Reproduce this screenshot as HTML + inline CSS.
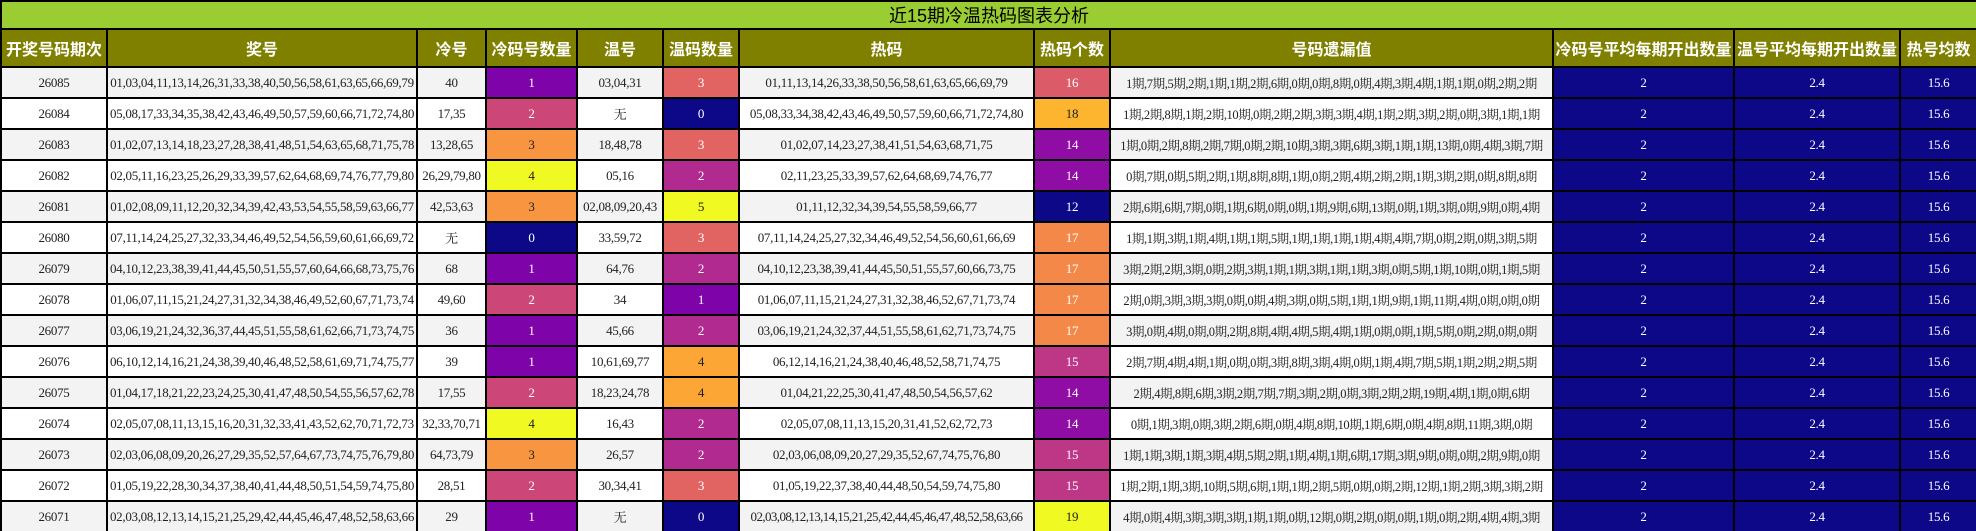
<!DOCTYPE html>
<html><head><meta charset="utf-8"><style>
html,body{margin:0;padding:0;background:#fff;width:1976px;height:531px;overflow:hidden}
table{border-collapse:collapse;table-layout:fixed;width:1976px}
td,th{border:2px solid #000;padding:0;text-align:center;white-space:nowrap;overflow:hidden}
.t td{background:#9acd32;height:26px;font:18px "Liberation Sans","Noto Sans CJK SC",sans-serif;color:#000}
.h th{background:#808000;color:#fff;height:36px;font:bold 16px "Liberation Sans","Noto Sans CJK SC",sans-serif}
tbody td{height:29px;font:13px "Liberation Serif","Noto Serif CJK SC",serif;color:#222;letter-spacing:-0.3px}
tbody tr:nth-child(odd) td{background:#f3f3f3}
tbody tr:nth-child(even) td{background:#fff}
tbody td.m{font-size:12.5px;letter-spacing:-0.4px}
tbody tr td.z{background:#0d0887;color:#fff}
tbody tr td.a{background:#7e03a8;color:#fff}
tbody tr td.b{background:#cc4778;color:#fff}
tbody tr td.c{background:#f89540;color:#222}
tbody tr td.d{background:#f0f921;color:#222}
tbody tr td.w2{background:#b12a90;color:#fff}
tbody tr td.w3{background:#e16462;color:#fff}
tbody tr td.w4{background:#fca636;color:#222}
tbody tr td.h14{background:#8f0da4;color:#fff}
tbody tr td.h15{background:#bd3786;color:#fff}
tbody tr td.h16{background:#db5c68;color:#fff}
tbody tr td.h17{background:#f48849;color:#fff}
tbody tr td.h18{background:#fdb42f;color:#222}
tbody tr td.n{background:#0d0887;color:#fff}
</style></head><body>
<table>
<colgroup><col style="width:106px"><col style="width:310px"><col style="width:69px"><col style="width:91px"><col style="width:86px"><col style="width:76px"><col style="width:295px"><col style="width:76px"><col style="width:443px"><col style="width:181px"><col style="width:166px"><col style="width:77px"></colgroup>
<thead>
<tr class="t"><td colspan="12">近15期冷温热码图表分析</td></tr>
<tr class="h"><th>开奖号码期次</th><th>奖号</th><th>冷号</th><th>冷码号数量</th><th>温号</th><th>温码数量</th><th>热码</th><th>热码个数</th><th>号码遗漏值</th><th>冷码号平均每期开出数量</th><th>温号平均每期开出数量</th><th>热号均数</th></tr>
</thead>
<tbody>
<tr><td>26085</td><td>01,03,04,11,13,14,26,31,33,38,40,50,56,58,61,63,65,66,69,79</td><td>40</td><td class="a">1</td><td>03,04,31</td><td class="w3">3</td><td>01,11,13,14,26,33,38,50,56,58,61,63,65,66,69,79</td><td class="h16">16</td><td class="m">1期,7期,5期,2期,1期,1期,2期,6期,0期,0期,8期,0期,4期,3期,4期,1期,1期,0期,2期,2期</td><td class="n">2</td><td class="n">2.4</td><td class="n">15.6</td></tr>
<tr><td>26084</td><td>05,08,17,33,34,35,38,42,43,46,49,50,57,59,60,66,71,72,74,80</td><td>17,35</td><td class="b">2</td><td>无</td><td class="z">0</td><td>05,08,33,34,38,42,43,46,49,50,57,59,60,66,71,72,74,80</td><td class="h18">18</td><td class="m">1期,2期,8期,1期,2期,10期,0期,2期,2期,3期,3期,4期,1期,2期,3期,2期,0期,3期,1期,1期</td><td class="n">2</td><td class="n">2.4</td><td class="n">15.6</td></tr>
<tr><td>26083</td><td>01,02,07,13,14,18,23,27,28,38,41,48,51,54,63,65,68,71,75,78</td><td>13,28,65</td><td class="c">3</td><td>18,48,78</td><td class="w3">3</td><td>01,02,07,14,23,27,38,41,51,54,63,68,71,75</td><td class="h14">14</td><td class="m">1期,0期,2期,8期,2期,7期,0期,2期,10期,3期,3期,6期,3期,1期,1期,13期,0期,4期,3期,7期</td><td class="n">2</td><td class="n">2.4</td><td class="n">15.6</td></tr>
<tr><td>26082</td><td>02,05,11,16,23,25,26,29,33,39,57,62,64,68,69,74,76,77,79,80</td><td>26,29,79,80</td><td class="d">4</td><td>05,16</td><td class="w2">2</td><td>02,11,23,25,33,39,57,62,64,68,69,74,76,77</td><td class="h14">14</td><td class="m">0期,7期,0期,5期,2期,1期,8期,8期,1期,0期,2期,4期,2期,2期,1期,3期,2期,0期,8期,8期</td><td class="n">2</td><td class="n">2.4</td><td class="n">15.6</td></tr>
<tr><td>26081</td><td>01,02,08,09,11,12,20,32,34,39,42,43,53,54,55,58,59,63,66,77</td><td>42,53,63</td><td class="c">3</td><td>02,08,09,20,43</td><td class="d">5</td><td>01,11,12,32,34,39,54,55,58,59,66,77</td><td class="z">12</td><td class="m">2期,6期,6期,7期,0期,1期,6期,0期,0期,1期,9期,6期,13期,0期,1期,3期,0期,9期,0期,4期</td><td class="n">2</td><td class="n">2.4</td><td class="n">15.6</td></tr>
<tr><td>26080</td><td>07,11,14,24,25,27,32,33,34,46,49,52,54,56,59,60,61,66,69,72</td><td>无</td><td class="z">0</td><td>33,59,72</td><td class="w3">3</td><td>07,11,14,24,25,27,32,34,46,49,52,54,56,60,61,66,69</td><td class="h17">17</td><td class="m">1期,1期,3期,1期,4期,1期,1期,5期,1期,1期,1期,1期,4期,4期,7期,0期,2期,0期,3期,5期</td><td class="n">2</td><td class="n">2.4</td><td class="n">15.6</td></tr>
<tr><td>26079</td><td>04,10,12,23,38,39,41,44,45,50,51,55,57,60,64,66,68,73,75,76</td><td>68</td><td class="a">1</td><td>64,76</td><td class="w2">2</td><td>04,10,12,23,38,39,41,44,45,50,51,55,57,60,66,73,75</td><td class="h17">17</td><td class="m">3期,2期,2期,3期,0期,2期,3期,1期,1期,3期,1期,1期,3期,0期,5期,1期,10期,0期,1期,5期</td><td class="n">2</td><td class="n">2.4</td><td class="n">15.6</td></tr>
<tr><td>26078</td><td>01,06,07,11,15,21,24,27,31,32,34,38,46,49,52,60,67,71,73,74</td><td>49,60</td><td class="b">2</td><td>34</td><td class="a">1</td><td>01,06,07,11,15,21,24,27,31,32,38,46,52,67,71,73,74</td><td class="h17">17</td><td class="m">2期,0期,3期,3期,3期,0期,0期,4期,3期,0期,5期,1期,1期,9期,1期,11期,4期,0期,0期,0期</td><td class="n">2</td><td class="n">2.4</td><td class="n">15.6</td></tr>
<tr><td>26077</td><td>03,06,19,21,24,32,36,37,44,45,51,55,58,61,62,66,71,73,74,75</td><td>36</td><td class="a">1</td><td>45,66</td><td class="w2">2</td><td>03,06,19,21,24,32,37,44,51,55,58,61,62,71,73,74,75</td><td class="h17">17</td><td class="m">3期,0期,4期,0期,0期,2期,8期,4期,4期,5期,4期,1期,0期,0期,1期,5期,0期,2期,0期,0期</td><td class="n">2</td><td class="n">2.4</td><td class="n">15.6</td></tr>
<tr><td>26076</td><td>06,10,12,14,16,21,24,38,39,40,46,48,52,58,61,69,71,74,75,77</td><td>39</td><td class="a">1</td><td>10,61,69,77</td><td class="w4">4</td><td>06,12,14,16,21,24,38,40,46,48,52,58,71,74,75</td><td class="h15">15</td><td class="m">2期,7期,4期,4期,1期,0期,0期,3期,8期,3期,4期,0期,1期,4期,7期,5期,1期,2期,2期,5期</td><td class="n">2</td><td class="n">2.4</td><td class="n">15.6</td></tr>
<tr><td>26075</td><td>01,04,17,18,21,22,23,24,25,30,41,47,48,50,54,55,56,57,62,78</td><td>17,55</td><td class="b">2</td><td>18,23,24,78</td><td class="w4">4</td><td>01,04,21,22,25,30,41,47,48,50,54,56,57,62</td><td class="h14">14</td><td class="m">2期,4期,8期,6期,3期,2期,7期,7期,3期,2期,0期,3期,2期,2期,19期,4期,1期,0期,6期</td><td class="n">2</td><td class="n">2.4</td><td class="n">15.6</td></tr>
<tr><td>26074</td><td>02,05,07,08,11,13,15,16,20,31,32,33,41,43,52,62,70,71,72,73</td><td>32,33,70,71</td><td class="d">4</td><td>16,43</td><td class="w2">2</td><td>02,05,07,08,11,13,15,20,31,41,52,62,72,73</td><td class="h14">14</td><td class="m">0期,1期,3期,0期,3期,2期,6期,0期,4期,8期,10期,1期,6期,0期,4期,8期,11期,3期,0期</td><td class="n">2</td><td class="n">2.4</td><td class="n">15.6</td></tr>
<tr><td>26073</td><td>02,03,06,08,09,20,26,27,29,35,52,57,64,67,73,74,75,76,79,80</td><td>64,73,79</td><td class="c">3</td><td>26,57</td><td class="w2">2</td><td>02,03,06,08,09,20,27,29,35,52,67,74,75,76,80</td><td class="h15">15</td><td class="m">1期,1期,3期,1期,3期,4期,5期,2期,1期,4期,1期,6期,17期,3期,9期,0期,0期,2期,9期,0期</td><td class="n">2</td><td class="n">2.4</td><td class="n">15.6</td></tr>
<tr><td>26072</td><td>01,05,19,22,28,30,34,37,38,40,41,44,48,50,51,54,59,74,75,80</td><td>28,51</td><td class="b">2</td><td>30,34,41</td><td class="w3">3</td><td>01,05,19,22,37,38,40,44,48,50,54,59,74,75,80</td><td class="h15">15</td><td class="m">1期,2期,1期,3期,10期,5期,6期,1期,1期,2期,5期,0期,0期,2期,12期,1期,2期,3期,3期,2期</td><td class="n">2</td><td class="n">2.4</td><td class="n">15.6</td></tr>
<tr><td>26071</td><td>02,03,08,12,13,14,15,21,25,29,42,44,45,46,47,48,52,58,63,66</td><td>29</td><td class="a">1</td><td>无</td><td class="z">0</td><td style="letter-spacing:-0.6px">02,03,08,12,13,14,15,21,25,42,44,45,46,47,48,52,58,63,66</td><td class="d">19</td><td class="m">4期,0期,4期,3期,3期,3期,1期,1期,0期,12期,0期,2期,0期,0期,1期,0期,2期,4期,4期,3期</td><td class="n">2</td><td class="n">2.4</td><td class="n">15.6</td></tr>
</tbody></table>
</body></html>
